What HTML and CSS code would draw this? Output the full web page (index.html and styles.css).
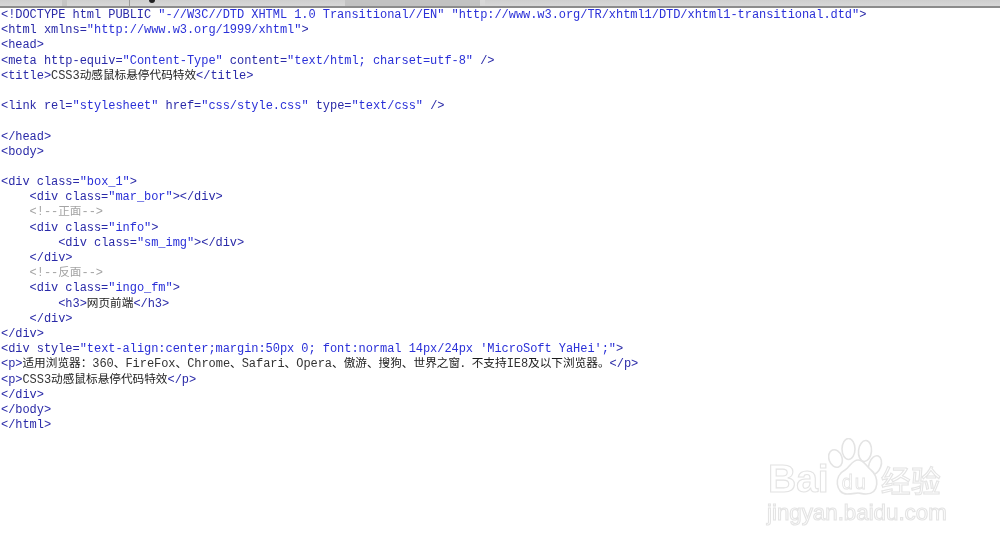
FILE: index.html
```html
<!DOCTYPE html>
<html lang="zh">
<head>
<meta charset="utf-8">
<title>CSS3动感鼠标悬停代码特效</title>
<link rel="stylesheet" href="styles.css">
</head>
<body>
<div class="tabs">
  <div class="tab t1"></div><div class="tab t2"></div><div class="tab t3"><i class="dot"></i></div><div class="tab t4"></div><div class="tab t5"></div>
</div>
<pre class="code"><span class="t">&lt;!DOCTYPE html PUBLIC <span class="s">"-//W3C//DTD XHTML 1.0 Transitional//EN" "http://www.w3.org/TR/xhtml1/DTD/xhtml1-transitional.dtd"</span>&gt;</span>
<span class="t">&lt;html xmlns=<span class="s">"http://www.w3.org/1999/xhtml"</span>&gt;</span>
<span class="t">&lt;head&gt;</span>
<span class="t">&lt;meta http-equiv=<span class="s">"Content-Type"</span> content=<span class="s">"text/html; charset=utf-8"</span> /&gt;</span>
<span class="t">&lt;title&gt;</span>CSS3<span class="cn">动感鼠标悬停代码特效</span><span class="t">&lt;/title&gt;</span>

<span class="t">&lt;link rel=<span class="s">"stylesheet"</span> href=<span class="s">"css/style.css"</span> type=<span class="s">"text/css"</span> /&gt;</span>

<span class="t">&lt;/head&gt;</span>
<span class="t">&lt;body&gt;</span>

<span class="t">&lt;div class=<span class="s">"box_1"</span>&gt;</span>
    <span class="t">&lt;div class=<span class="s">"mar_bor"</span>&gt;&lt;/div&gt;</span>
    <span class="c">&lt;!--<span class="cn">正面</span>--&gt;</span>
    <span class="t">&lt;div class=<span class="s">"info"</span>&gt;</span>
        <span class="t">&lt;div class=<span class="s">"sm_img"</span>&gt;&lt;/div&gt;</span>
    <span class="t">&lt;/div&gt;</span>
    <span class="c">&lt;!--<span class="cn">反面</span>--&gt;</span>
    <span class="t">&lt;div class=<span class="s">"ingo_fm"</span>&gt;</span>
        <span class="t">&lt;h3&gt;</span><span class="cn">网页前端</span><span class="t">&lt;/h3&gt;</span>
    <span class="t">&lt;/div&gt;</span>
<span class="t">&lt;/div&gt;</span>
<span class="t">&lt;div style=<span class="s">"text-align:center;margin:50px 0; font:normal 14px/24px 'MicroSoft YaHei';"</span>&gt;</span>
<span class="t">&lt;p&gt;</span><span class="cn">适用浏览器：</span>360<span class="cn">、</span>FireFox<span class="cn">、</span>Chrome<span class="cn">、</span>Safari<span class="cn">、</span>Opera<span class="cn">、傲游、搜狗、世界之窗．不支持</span>IE8<span class="cn">及以下浏览器。</span><span class="t">&lt;/p&gt;</span>
<span class="t">&lt;p&gt;</span>CSS3<span class="cn">动感鼠标悬停代码特效</span><span class="t">&lt;/p&gt;</span>
<span class="t">&lt;/div&gt;</span>
<span class="t">&lt;/body&gt;</span>
<span class="t">&lt;/html&gt;</span></pre>
<div class="mark">
  <svg class="paw" viewBox="0 0 56 60" width="56" height="60" aria-hidden="true">
    <g fill="#fff" stroke="#e4e4e4" stroke-width="1.6">
      <ellipse cx="7.5" cy="20.5" rx="6.5" ry="9" transform="rotate(-20 7.5 20.5)"/>
      <ellipse cx="20.5" cy="11" rx="6.5" ry="10.5"/>
      <ellipse cx="37" cy="13" rx="6.5" ry="10.5" transform="rotate(6 37 13)"/>
      <ellipse cx="47" cy="27" rx="6" ry="9.5" transform="rotate(20 47 27)"/>
      <path d="M30 22c6 0 8 6 13 10 8 6 9 24-5 24-4 0-6-1-8-1s-6 1-11 1C8 56 5 38 17 32c5-3 7-10 13-10z"/>
    </g>
  </svg>
  <div class="row1"><span class="bai">Bai</span><span class="du">du</span><span class="jy">经验</span></div>
  <div class="row2">jingyan.baidu.com</div>
</div>
</body>
</html>
```

FILE: styles.css
```css
html, body {
  margin: 0;
  height: 545px;
  overflow: hidden;
  background: #fff;
}
body {
  position: relative;
}
.tabs {
  display: flex;
  height: 6px;
  background: #d4d4d4;
  border-bottom: 2px solid #8c8c8c;
}
.tab {
  position: relative;
  background: linear-gradient(#cfcfcf, #d8d8d8);
}
.t1 { width: 62px; border-right: 5px solid #c4c4c4; }
.t2 { width: 62px; border-right: 1px solid #9a9a9a; }
.t3 { width: 215px; }
.t4 { width: 135px; background: #c2c2c2; border-right: 5px solid #d8d8d8; }
.t5 { flex: 1; }
.dot {
  position: absolute;
  left: 19px;
  top: 0;
  width: 6px;
  height: 3px;
  background: #222;
  border-radius: 0 0 3px 3px;
}
.code {
  margin: 0;
  padding: 0 0 0 1px;
  font: 12px/15.19px "Liberation Mono", monospace;
  letter-spacing: -0.05px;
  color: #333;
  filter: blur(0.25px);
}
.t { color: #2a2aa8; }
.s { color: #2a30d8; }
.c { color: #a4a4a4; }
.cn {
  font-family: "Noto Sans CJK SC", sans-serif;
  font-size: 11.65px;
  color: #1a1a1a;
  letter-spacing: 0;
  line-height: 0;
}
.c .cn { color: #a4a4a4; }
.mark {
  position: absolute;
  left: 766px;
  top: 437px;
  width: 190px;
  height: 90px;
  font-family: "Liberation Sans", sans-serif;
  color: #fff;
  -webkit-text-stroke: 1.1px #e4e4e4;
  filter: blur(0.4px);
}
.paw {
  position: absolute;
  left: 62px;
  top: 1px;
}
.row1 {
  position: absolute;
  left: 2px;
  top: 20px;
  display: flex;
  align-items: baseline;
  font-size: 39px;
  line-height: 44px;
  font-weight: 700;
}
.du {
  width: 52px;
  padding-left: 13px;
  box-sizing: border-box;
  position: relative;
  top: -3px;
  font-size: 20px;
  letter-spacing: 2px;
  font-weight: 400;
  -webkit-text-stroke-width: 0.8px;
}
.jy {
  font-family: "Noto Sans CJK SC", sans-serif;
  font-size: 30px;
  font-weight: 400;
}
.row2 {
  position: absolute;
  left: 1px;
  top: 63px;
  font-size: 22.3px;
  line-height: 26px;
  white-space: nowrap;
}
```
